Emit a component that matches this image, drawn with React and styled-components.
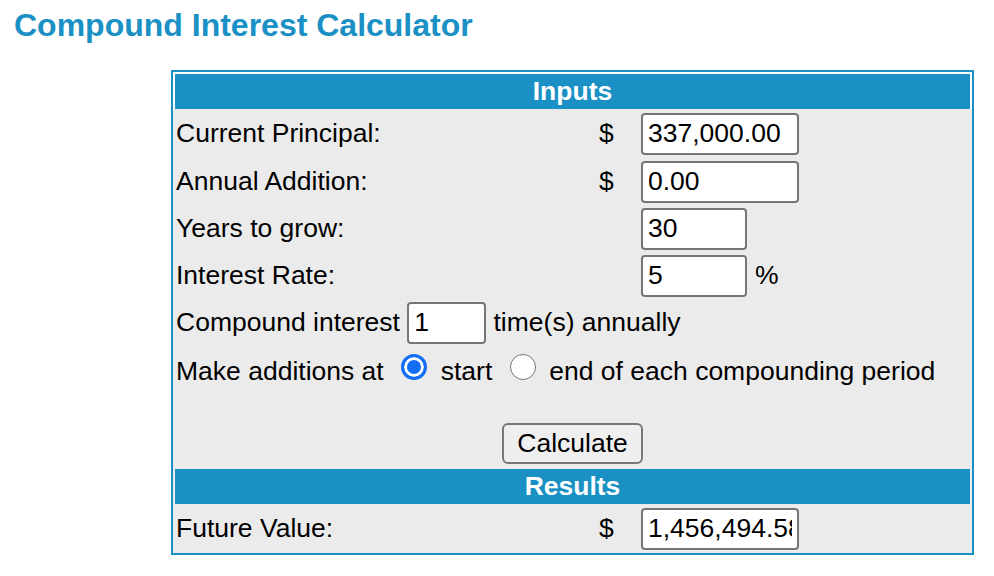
import React from "react";
import styled, { createGlobalStyle } from "styled-components";

const BLUE = "#1a90c4";

const Global = createGlobalStyle`
  html, body { margin: 0; padding: 0; background: #fff; }
  body {
    font-family: "Liberation Sans", Arial, Helvetica, sans-serif;
    color: #000;
  }
`;

const Page = styled.div`
  width: 994px;
  height: 576px;
  overflow: hidden;
`;

const Title = styled.h1`
  margin: 0;
  padding: 9px 0 0 14px;
  font-size: 32px;
  line-height: 32px;
  font-weight: 700;
  color: ${BLUE};
`;

const Panel = styled.div`
  box-sizing: border-box;
  width: 803px;
  margin: 29px 0 0 171px;
  border: 2px solid ${BLUE};
  background: #ebebeb;
  padding: 0 2px;
  font-size: 26.5px;
`;

const SectionHeader = styled.div`
  height: 35px;
  line-height: 35px;
  text-align: center;
  background: ${BLUE};
  color: #fff;
  font-weight: 700;
  ${(p) =>
    p.$framed &&
    `
    margin: 0 -2px;
    border: 2px solid #fff;
    border-bottom: none;
  `}
`;

const FieldRow = styled.div`
  display: grid;
  grid-template-columns: 424px 42px 1fr;
  align-items: center;
  height: ${(p) => p.$h || 47}px;
`;

const Label = styled.div`
  padding-left: 1px;
  white-space: nowrap;
`;

const Currency = styled.div``;

const InputCell = styled.div`
  display: flex;
  align-items: center;
  gap: 8px;
`;

const TextInput = styled.input`
  box-sizing: border-box;
  width: ${(p) => p.$w}px;
  height: 42px;
  margin: 0;
  padding: 0 5px;
  border: 2px solid #767676;
  border-radius: 4px;
  background: #fff;
  font: inherit;
  font-size: 26.5px;
  color: #000;
  outline: none;
`;

const InlineRow = styled.div`
  display: flex;
  align-items: center;
  padding-left: 1px;
  padding-top: ${(p) => p.$pt || 0}px;
  white-space: nowrap;
  gap: ${(p) => p.$gap || 0}px;
  height: ${(p) => p.$h || 47}px;
`;

const Radio = styled.input.attrs({ type: "radio" })`
  appearance: none;
  -webkit-appearance: none;
  box-sizing: border-box;
  width: 26px;
  height: 26px;
  margin: 0 13.5px 8px 17.5px;
  border-radius: 50%;
  border: 1.5px solid #777;
  background: #fff;
  flex: none;
  &:checked {
    border: 3px solid #146ef5;
    background: #146ef5;
    box-shadow: inset 0 0 0 3px #fff;
  }
`;

const Spacer = styled.div`
  height: ${(p) => p.$h}px;
`;

const ButtonRow = styled.div`
  display: flex;
  justify-content: center;
  padding: 2px 0 5px;
`;

const Button = styled.button`
  box-sizing: border-box;
  width: 141px;
  height: 41px;
  margin: 0;
  padding: 0;
  border: 2px solid #777;
  border-radius: 6px;
  background: #efefef;
  font: inherit;
  font-size: 26.5px;
  color: #000;
`;

export default function App() {
  return (
    <Page>
      <Global />
      <Title>Compound Interest Calculator</Title>
      <Panel>
        <SectionHeader $framed>Inputs</SectionHeader>
        <FieldRow $h={49}>
          <Label>Current Principal:</Label>
          <Currency>$</Currency>
          <InputCell>
            <TextInput $w={158} defaultValue="337,000.00" />
          </InputCell>
        </FieldRow>
        <FieldRow>
          <Label>Annual Addition:</Label>
          <Currency>$</Currency>
          <InputCell>
            <TextInput $w={158} defaultValue="0.00" />
          </InputCell>
        </FieldRow>
        <FieldRow>
          <Label>Years to grow:</Label>
          <Currency />
          <InputCell>
            <TextInput $w={106} defaultValue="30" />
          </InputCell>
        </FieldRow>
        <FieldRow>
          <Label>Interest Rate:</Label>
          <Currency />
          <InputCell>
            <TextInput $w={106} defaultValue="5" />
            <span>%</span>
          </InputCell>
        </FieldRow>
        <InlineRow $gap={7.3}>
          <span>Compound interest</span>
          <TextInput $w={79} defaultValue="1" />
          <span>time(s) annually</span>
        </InlineRow>
        <InlineRow $h={42} $pt={4}>
          <span>Make additions at</span>
          <Radio name="addat" defaultChecked />
          <span>start</span>
          <Radio name="addat" />
          <span>end of each compounding period</span>
        </InlineRow>
        <Spacer $h={29} />
        <ButtonRow>
          <Button type="button">Calculate</Button>
        </ButtonRow>
        <SectionHeader>Results</SectionHeader>
        <FieldRow $h={49}>
          <Label>Future Value:</Label>
          <Currency>$</Currency>
          <InputCell>
            <TextInput $w={158} defaultValue="1,456,494.58" readOnly />
          </InputCell>
        </FieldRow>
      </Panel>
    </Page>
  );
}
